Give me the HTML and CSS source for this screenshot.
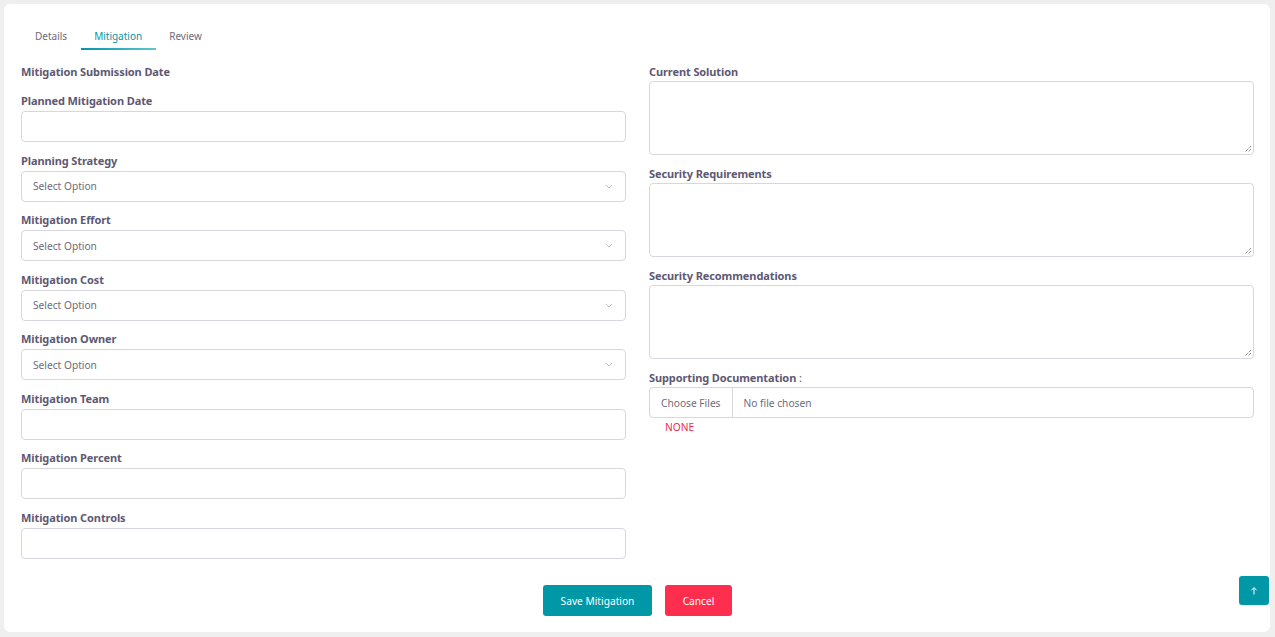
FILE: index.html
```html
<!DOCTYPE html>
<html>
<head>
<meta charset="utf-8">
<link rel="stylesheet" href="styles.css">
</head>
<body>
<div class="card">
  <div class="tabs">
    <div class="tab">Details</div>
    <div class="tab active">Mitigation</div>
    <div class="tab">Review</div>
  </div>
  <div class="cols">
    <div class="col">
      <div class="field first"><label class="lbl">Mitigation Submission Date</label></div>
      <div class="field"><label class="lbl">Planned Mitigation Date</label><div class="input"></div></div>
      <div class="field"><label class="lbl">Planning Strategy</label><div class="input select"><span>Select Option</span><svg class="chev" width="8" height="5" viewBox="0 0 8 5"><path d="M1 1l3 3 3-3" fill="none" stroke="#b9b9c3" stroke-width="0.9"/></svg></div></div>
      <div class="field"><label class="lbl">Mitigation Effort</label><div class="input select"><span>Select Option</span><svg class="chev" width="8" height="5" viewBox="0 0 8 5"><path d="M1 1l3 3 3-3" fill="none" stroke="#b9b9c3" stroke-width="0.9"/></svg></div></div>
      <div class="field"><label class="lbl">Mitigation Cost</label><div class="input select"><span>Select Option</span><svg class="chev" width="8" height="5" viewBox="0 0 8 5"><path d="M1 1l3 3 3-3" fill="none" stroke="#b9b9c3" stroke-width="0.9"/></svg></div></div>
      <div class="field"><label class="lbl">Mitigation Owner</label><div class="input select"><span>Select Option</span><svg class="chev" width="8" height="5" viewBox="0 0 8 5"><path d="M1 1l3 3 3-3" fill="none" stroke="#b9b9c3" stroke-width="0.9"/></svg></div></div>
      <div class="field"><label class="lbl">Mitigation Team</label><div class="input"></div></div>
      <div class="field"><label class="lbl">Mitigation Percent</label><div class="input"></div></div>
      <div class="field"><label class="lbl">Mitigation Controls</label><div class="input"></div></div>
    </div>
    <div class="col">
      <div class="field tfield"><label class="lbl">Current Solution</label><div class="textarea"><svg class="grip" width="8" height="8" viewBox="0 0 8 8"><path d="M7 1L1 7M7 4L4 7" stroke="#555" stroke-width="1" stroke-dasharray="1 1"/></svg></div></div>
      <div class="field tfield"><label class="lbl">Security Requirements</label><div class="textarea"><svg class="grip" width="8" height="8" viewBox="0 0 8 8"><path d="M7 1L1 7M7 4L4 7" stroke="#555" stroke-width="1" stroke-dasharray="1 1"/></svg></div></div>
      <div class="field tfield"><label class="lbl">Security Recommendations</label><div class="textarea"><svg class="grip" width="8" height="8" viewBox="0 0 8 8"><path d="M7 1L1 7M7 4L4 7" stroke="#555" stroke-width="1" stroke-dasharray="1 1"/></svg></div></div>
      <div class="field tfield"><label class="lbl">Supporting Documentation <span class="colon">:</span></label>
        <div class="file"><span class="choose">Choose Files</span><span class="nofile">No file chosen</span></div>
        <div class="none">NONE</div>
      </div>
    </div>
  </div>
  <div class="actions">
    <button class="btn save">Save Mitigation</button>
    <button class="btn cancel">Cancel</button>
  </div>
  <div class="totop"><svg width="10" height="10" viewBox="0 0 10 10"><path d="M5 8.5V1.8M2.3 4.3L5 1.6l2.7 2.7" fill="none" stroke="#fff" stroke-width="1"/></svg></div>
</div>
</body>
</html>
```
FILE: styles.css
```css
* { box-sizing: border-box; }
html, body { margin: 0; padding: 0; }
body {
  background: #efefef;
  font-family: "Noto Sans", "Open Sans", sans-serif;
  color: #6e6b7b;
  padding: 4px 5px 5px 4px;
}
.card {
  position: relative;
  background: #fff;
  border-radius: 6px;
  height: 628px;
  padding: 0 16px 0 17px;
}
.tabs {
  display: flex;
  padding-top: 26px;
  height: 46px;
  margin-bottom: 14px;
}
.tab {
  font-size: 10px;
  padding: 0 13.5px;
  height: 20px;
  line-height: 12px;
  color: #6e6b7b;
}
.tab:first-child { padding-left: 14px; }
.tab.active {
  color: #0097a7;
  position: relative;
}
.tab.active::after {
  content: "";
  position: absolute;
  left: 0; right: 0; bottom: 0;
  height: 2px;
  background: linear-gradient(90deg, #0097a7, #5fc6cf);
}
.cols {
  display: grid;
  grid-template-columns: 605px 605px;
  column-gap: 23px;
}
.field { margin-bottom: 10.5px; }
.field.first { margin-bottom: 13px; }
.tfield { margin-bottom: 11px; }
.lbl {
  display: block;
  font-size: 11px;
  font-weight: 700;
  color: #5e5873;
  line-height: 16px;
  margin-bottom: 2px;
  letter-spacing: -0.1px;
}
.tfield .lbl { margin-bottom: 1px; }
.colon { font-weight: 400; }
.input {
  height: 31px;
  border: 1px solid #d8d6de;
  border-radius: 4px;
  display: flex;
  align-items: center;
  padding: 0 11px;
  font-size: 10.2px;
  color: #6e6b7b;
}
.select { justify-content: space-between; padding-right: 12px; }
.textarea {
  position: relative;
  height: 74px;
  border: 1px solid #d8d6de;
  border-radius: 4px;
}
.grip { position: absolute; right: 1px; bottom: 1px; }
.file {
  display: flex;
  height: 31px;
  border: 1px solid #d8d6de;
  border-radius: 4px;
  font-size: 10.2px;
  align-items: stretch;
}
.choose {
  display: flex;
  align-items: center;
  padding: 0 11px;
  border-right: 1px solid #d8d6de;
  color: #6e6b7b;
}
.nofile {
  display: flex;
  align-items: center;
  padding: 0 11px;
}
.none {
  color: #ea2c4c;
  font-size: 10.2px;
  margin-top: 2px;
  padding-left: 16px;
  line-height: 14px;
}
.actions {
  display: flex;
  justify-content: center;
  gap: 13px;
  margin-top: 16px;
}
.btn {
  height: 31px;
  border: none;
  border-radius: 3px;
  color: #fff;
  font-family: inherit;
  font-size: 10.2px;
  padding: 0;
  white-space: nowrap;
}
.save { background: #0097a7; width: 109px; }
.cancel { background: #ff2d4e; width: 67px; }
.totop {
  position: absolute;
  right: 1px;
  top: 572px;
  width: 30px;
  height: 29px;
  background: #0097a7;
  border-radius: 3px;
  display: flex;
  align-items: center;
  justify-content: center;
}
```
